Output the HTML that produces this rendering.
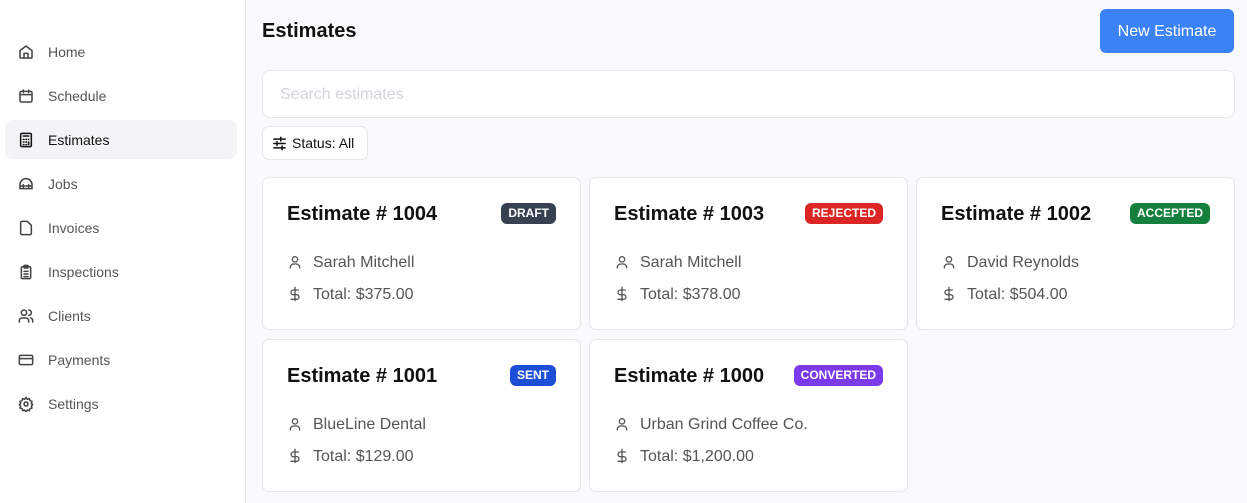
<!DOCTYPE html>
<html><head><meta charset="utf-8"><style>
*{box-sizing:border-box;margin:0;padding:0}
body{width:1247px;height:503px;overflow:hidden;font-family:"Liberation Sans",sans-serif;background:#f9fafb;position:relative}
.side{position:absolute;left:0;top:0;width:246px;height:503px;background:#fff;border-right:1px solid #e5e7eb}
.item{position:absolute;left:5px;width:232px;height:39px;border-radius:8px;display:flex;align-items:center;padding-left:13px;font-size:14px;color:#555}
.item svg{display:block;width:16px;height:16px;margin-right:14px;fill:none;stroke:#444;stroke-width:2.3;stroke-linecap:round;stroke-linejoin:round}
.item.act{background:#f3f4f6;color:#111}
.item.act svg{stroke:#111}
h1{position:absolute;left:262px;top:20px;font-size:20px;font-weight:bold;color:#111}
.btn{position:absolute;left:1100px;top:9px;width:134px;height:44px;background:#3b82f6;color:#fff;border-radius:6px;font-size:16px;display:flex;align-items:center;justify-content:center;padding-top:1px}
.search{position:absolute;left:262px;top:70px;width:973px;height:48px;background:#fff;border:1px solid #e5e7eb;border-radius:8px;padding-left:17px;line-height:48px;color:#d1d5db;font-size:16px}
.status{position:absolute;left:262px;top:126px;width:106px;height:34px;background:#fff;border:1px solid #e5e7eb;border-radius:7px;font-size:14px;color:#111;display:flex;align-items:center;padding-left:9px}
.card{position:absolute;width:319px;height:153px;background:#fff;border:1px solid #e5e7eb;border-radius:7px}
.card .t{position:absolute;left:24px;top:25px;font-size:20px;font-weight:bold;color:#111}
.badge{position:absolute;right:24px;top:25px;height:21px;padding:0 7px;border-radius:6px;color:#fff;font-size:12px;font-weight:bold;line-height:21px}
.row{position:absolute;left:24px;font-size:16px;color:#555;display:flex;align-items:center;height:20px}
.row svg{display:block;width:16px;height:16px;margin-right:10px;margin-top:-2px;fill:none;stroke:#555;stroke-width:2;stroke-linecap:round;stroke-linejoin:round}
</style></head><body>
<div class="side">
<div class="item" style="top:32px"><svg viewBox="0 0 24 24"><path d="M3 10l9-7 9 7v10a1 1 0 0 1-1 1H4a1 1 0 0 1-1-1z"/><path d="M9 21v-7h6v7"/></svg>Home</div>
<div class="item" style="top:76px"><svg viewBox="0 0 24 24"><rect x="3" y="5" width="18" height="16" rx="2"/><path d="M8 3v4M16 3v4M3 10h18"/></svg>Schedule</div>
<div class="item act" style="top:120px"><svg viewBox="0 0 24 24"><rect x="4" y="2" width="16" height="20" rx="2"/><path d="M8 6h8M8 11h1M12 11h1M16 11h0M8 15h1M12 15h1M8 19h1M12 19h1M16 15v4"/></svg>Estimates</div>
<div class="item" style="top:164px"><svg viewBox="0 0 24 24"><path d="M3 13a9 9 0 0 1 18 0v6H3z"/><path d="M3 15h18M8 13v4M16 13v4"/></svg>Jobs</div>
<div class="item" style="top:208px"><svg viewBox="0 0 24 24"><path d="M14 2H6a2 2 0 0 0-2 2v16a2 2 0 0 0 2 2h12a2 2 0 0 0 2-2V8z"/></svg>Invoices</div>
<div class="item" style="top:252px"><svg viewBox="0 0 24 24"><rect x="5" y="4" width="14" height="18" rx="2"/><rect x="9" y="2" width="6" height="4" rx="1"/><path d="M9 11h6M9 15h6M9 19h6"/></svg>Inspections</div>
<div class="item" style="top:296px"><svg viewBox="0 0 24 24"><circle cx="9" cy="7" r="4"/><path d="M2 21v-2a4 4 0 0 1 4-4h6a4 4 0 0 1 4 4v2M16 3a4 4 0 0 1 0 8M22 21v-2a4 4 0 0 0-3-4"/></svg>Clients</div>
<div class="item" style="top:340px"><svg viewBox="0 0 24 24"><rect x="2" y="5" width="20" height="14" rx="2"/><path d="M2 10h20"/></svg>Payments</div>
<div class="item" style="top:384px"><svg viewBox="0 0 24 24"><circle cx="12" cy="12" r="3"/><path d="M12 2l2 3 3-1 1 3 3 1-1 3 2 2-2 2 1 3-3 1-1 3-3-1-2 3-2-3-3 1-1-3-3-1 1-3-2-2 2-2-1-3 3-1 1-3 3 1z"/></svg>Settings</div>
</div>
<h1>Estimates</h1>
<div class="btn">New Estimate</div>
<div class="search">Search estimates</div>
<div class="status"><svg viewBox="0 0 24 24" width="15" height="15" style="margin-right:5px;fill:none;stroke:#111;stroke-width:2.5;stroke-linecap:round"><path d="M3 5h18M3 12h18M3 19h18M14 2v6M8 9v6M16 16v6"/></svg>Status: All</div>

<div class="card" style="left:262px;top:177px"><div class="t">Estimate # 1004</div><div class="badge" style="background:#374151">DRAFT</div>
<div class="row" style="top:75px"><svg viewBox="0 0 24 24"><circle cx="12" cy="8" r="4"/><path d="M5 21v-1a5 5 0 0 1 5-5h4a5 5 0 0 1 5 5v1"/></svg>Sarah Mitchell</div>
<div class="row" style="top:107px"><svg viewBox="0 0 24 24"><path d="M12 2v20M17 6H9.5a3.5 3.5 0 0 0 0 7h5a3.5 3.5 0 0 1 0 7H6"/></svg>Total: $375.00</div></div>

<div class="card" style="left:589px;top:177px"><div class="t">Estimate # 1003</div><div class="badge" style="background:#dc2626">REJECTED</div>
<div class="row" style="top:75px"><svg viewBox="0 0 24 24"><circle cx="12" cy="8" r="4"/><path d="M5 21v-1a5 5 0 0 1 5-5h4a5 5 0 0 1 5 5v1"/></svg>Sarah Mitchell</div>
<div class="row" style="top:107px"><svg viewBox="0 0 24 24"><path d="M12 2v20M17 6H9.5a3.5 3.5 0 0 0 0 7h5a3.5 3.5 0 0 1 0 7H6"/></svg>Total: $378.00</div></div>

<div class="card" style="left:916px;top:177px"><div class="t">Estimate # 1002</div><div class="badge" style="background:#15803d">ACCEPTED</div>
<div class="row" style="top:75px"><svg viewBox="0 0 24 24"><circle cx="12" cy="8" r="4"/><path d="M5 21v-1a5 5 0 0 1 5-5h4a5 5 0 0 1 5 5v1"/></svg>David Reynolds</div>
<div class="row" style="top:107px"><svg viewBox="0 0 24 24"><path d="M12 2v20M17 6H9.5a3.5 3.5 0 0 0 0 7h5a3.5 3.5 0 0 1 0 7H6"/></svg>Total: $504.00</div></div>

<div class="card" style="left:262px;top:339px"><div class="t">Estimate # 1001</div><div class="badge" style="background:#1d4ed8">SENT</div>
<div class="row" style="top:75px"><svg viewBox="0 0 24 24"><circle cx="12" cy="8" r="4"/><path d="M5 21v-1a5 5 0 0 1 5-5h4a5 5 0 0 1 5 5v1"/></svg>BlueLine Dental</div>
<div class="row" style="top:107px"><svg viewBox="0 0 24 24"><path d="M12 2v20M17 6H9.5a3.5 3.5 0 0 0 0 7h5a3.5 3.5 0 0 1 0 7H6"/></svg>Total: $129.00</div></div>

<div class="card" style="left:589px;top:339px"><div class="t">Estimate # 1000</div><div class="badge" style="background:#7c3aed">CONVERTED</div>
<div class="row" style="top:75px"><svg viewBox="0 0 24 24"><circle cx="12" cy="8" r="4"/><path d="M5 21v-1a5 5 0 0 1 5-5h4a5 5 0 0 1 5 5v1"/></svg>Urban Grind Coffee Co.</div>
<div class="row" style="top:107px"><svg viewBox="0 0 24 24"><path d="M12 2v20M17 6H9.5a3.5 3.5 0 0 0 0 7h5a3.5 3.5 0 0 1 0 7H6"/></svg>Total: $1,200.00</div></div>
</body></html>
